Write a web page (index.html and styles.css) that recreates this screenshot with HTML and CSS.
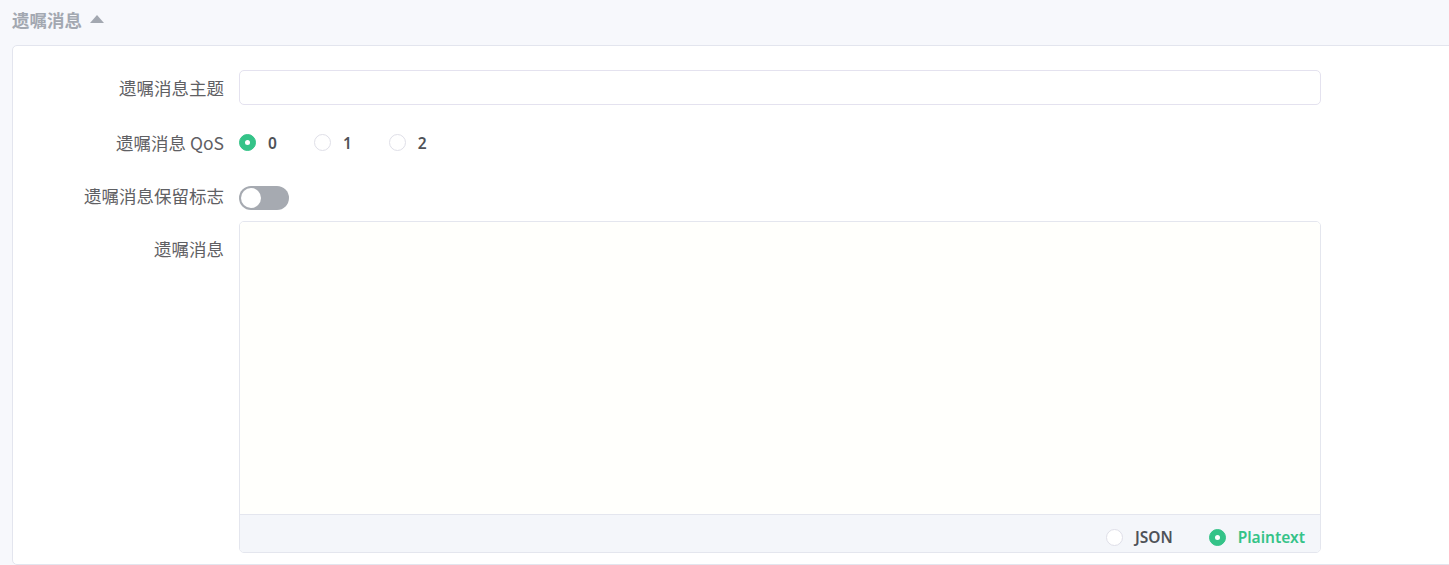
FILE: index.html
```html
<!DOCTYPE html>
<html lang="zh">
<head>
<meta charset="utf-8">
<link rel="stylesheet" href="styles.css">
</head>
<body>
<div class="section-head">
  <span class="section-title">遗嘱消息</span>
  <span class="caret"></span>
</div>
<div class="card">
  <div class="form-row">
    <label class="form-label">遗嘱消息主题</label>
    <div class="form-ctrl"><div class="text-input"></div></div>
  </div>
  <div class="form-row">
    <label class="form-label">遗嘱消息 QoS</label>
    <div class="form-ctrl radios">
      <span class="radio checked"><span class="dot"></span><span class="radio-text">0</span></span>
      <span class="radio"><span class="dot"></span><span class="radio-text">1</span></span>
      <span class="radio"><span class="dot"></span><span class="radio-text">2</span></span>
    </div>
  </div>
  <div class="form-row">
    <label class="form-label label-up">遗嘱消息保留标志</label>
    <div class="form-ctrl"><span class="switch"><span class="knob"></span></span></div>
  </div>
  <div class="form-row row-area">
    <label class="form-label label-top">遗嘱消息</label>
    <div class="editor">
      <div class="editor-body"></div>
      <div class="editor-foot">
        <span class="radio"><span class="dot"></span><span class="radio-text">JSON</span></span>
        <span class="radio checked"><span class="dot"></span><span class="radio-text">Plaintext</span></span>
      </div>
    </div>
  </div>
</div>
</body>
</html>
```

FILE: styles.css
```css
html, body {
  margin: 0;
  padding: 0;
}
body {
  background: #f7f8fc;
  font-family: "Noto Sans CJK SC", "Noto Sans", sans-serif;
  overflow: hidden;
  width: 1449px;
  height: 565px;
}
.section-head {
  height: 45px;
  padding-left: 12px;
  display: flex;
  align-items: center;
  gap: 8px;
  box-sizing: border-box;
  padding-bottom: 6px;
}
.section-title {
  font-size: 17.5px;
  font-weight: 700;
  color: #a3a8b1;
  line-height: 1;
}
.caret {
  width: 0;
  height: 0;
  border-left: 7px solid transparent;
  border-right: 7px solid transparent;
  border-bottom: 8px solid #a3a8b1;
  margin-top: -2px;
}
.card {
  margin-left: 12px;
  width: 1460px;
  background: #fff;
  border: 1px solid #e3e5ee;
  border-radius: 5px;
  padding: 24px 0 11px 0;
  box-sizing: border-box;
}
.form-row {
  display: grid;
  grid-template-columns: 211px 1082px;
  column-gap: 15px;
  height: 35px;
  margin-bottom: 20px;
  align-items: center;
}
.row-area {
  height: auto;
  margin-top: -14px;
  margin-bottom: 0;
  align-items: start;
}
.form-label {
  text-align: right;
  font-size: 17.5px;
  color: #5f6064;
  line-height: 35px;
  white-space: nowrap;
}
.label-up {
  line-height: 31px;
  padding-bottom: 4px;
}
.label-top {
  padding-top: 10px;
}
.form-ctrl {
  display: flex;
  align-items: center;
  height: 35px;
}
.text-input {
  width: 100%;
  height: 35px;
  box-sizing: border-box;
  border: 1px solid #e4e2ef;
  border-radius: 5px;
  background: #fff;
}
.radio {
  display: inline-flex;
  align-items: center;
  margin-right: 37px;
}
.radio .dot {
  width: 17px;
  height: 17px;
  box-sizing: border-box;
  border-radius: 50%;
  border: 1px solid #dfdfe8;
  background: #fff;
  position: relative;
}
.radio.checked .dot {
  background: #34c388;
  border-color: #34c388;
}
.radio.checked .dot::after {
  content: "";
  position: absolute;
  left: 50%;
  top: 50%;
  width: 5px;
  height: 5px;
  margin: -2.5px 0 0 -2.5px;
  border-radius: 50%;
  background: #fff;
}
.radio-text {
  padding-left: 12px;
  font-family: "Noto Sans", sans-serif;
  font-size: 15.5px;
  font-weight: 600;
  color: #4f5258;
}
.switch {
  width: 50px;
  height: 24px;
  border-radius: 12px;
  background: #a6aab1;
  display: inline-flex;
  align-items: center;
  padding: 0 2px;
  box-sizing: border-box;
}
.knob {
  width: 20px;
  height: 20px;
  border-radius: 50%;
  background: #fff;
}
.editor {
  width: 1082px;
  height: 332px;
  box-sizing: border-box;
  border: 1px solid #e4e6ee;
  border-radius: 5px;
  display: flex;
  flex-direction: column;
  overflow: hidden;
}
.editor-body {
  flex: 1;
  background: #fffffc;
}
.editor-foot {
  height: 38px;
  box-sizing: border-box;
  border-top: 1px solid #e4e6ee;
  background: #f4f6fa;
  display: flex;
  align-items: center;
  justify-content: flex-end;
  padding: 7px 15px 0 0;
}
.editor-foot .radio {
  margin-right: 0;
  margin-left: 36px;
}
.editor-foot .radio.checked .radio-text {
  color: #34c388;
}
```
